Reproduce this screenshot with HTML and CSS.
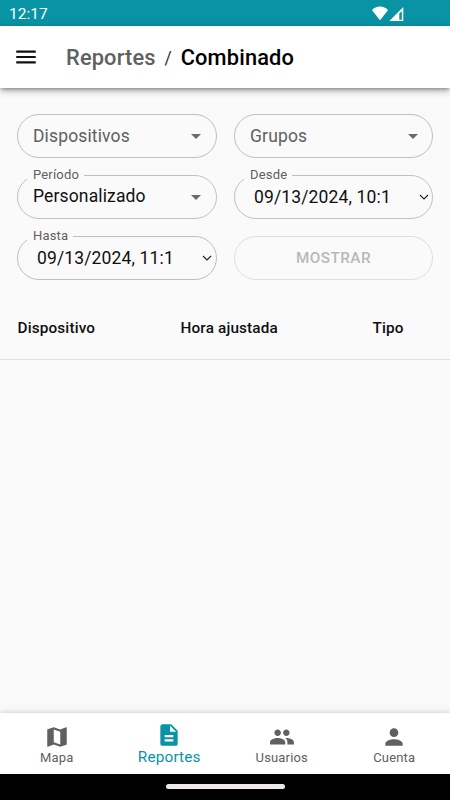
FILE: index.html
```
<!DOCTYPE html>
<html lang="es">
<head>
<meta charset="utf-8">
<title>Reportes / Combinado</title>
<link rel="stylesheet" href="styles.css">
</head>
<body>
<div class="status">
  <span class="clock">12:17</span>
  <svg class="signals" width="34" height="16" viewBox="0 0 34 16"><path fill="#fff" d="M1 4.300C5-.7 13-.7 17 4.300L9 14.200z"/><path fill="#fff" fill-rule="evenodd" d="M18.300 15L32.300 .9V15zM28.300 7.600V13.800h2.500V5z"/></svg>
</div>
<header class="appbar">
  <svg class="menu" width="26" height="26" viewBox="0 0 24 24"><path d="M3 18h18v-2H3v2zm0-5h18v-2H3v2zm0-7v2h18V6H3z"/></svg>
  <h1 class="crumbs"><span class="parent">Reportes</span><span class="slash">/</span><span class="current">Combinado</span></h1>
</header>
<main class="content">
  <form class="filters">
    <div class="field"><span class="value muted">Dispositivos</span><i class="arrow"></i></div>
    <div class="field"><span class="value muted">Grupos</span><i class="arrow"></i></div>
    <div class="field notched"><fieldset><legend>Período</legend></fieldset><label>Período</label><span class="value raised">Personalizado</span><i class="arrow"></i></div>
    <div class="field notched"><fieldset><legend>Desde</legend></fieldset><label>Desde</label><span class="value date">09/13/2024, 10:1</span><svg class="chevron" width="10" height="7" viewBox="0 0 10 7"><path d="M1 1l4 4 4-4"/></svg></div>
    <div class="field notched"><fieldset><legend>Hasta</legend></fieldset><label>Hasta</label><span class="value date">09/13/2024, 11:1</span><svg class="chevron" width="10" height="7" viewBox="0 0 10 7"><path d="M1 1l4 4 4-4"/></svg></div>
    <button class="show" type="button" disabled>MOSTRAR</button>
  </form>
  <div class="table-head"><span>Dispositivo</span><span>Hora ajustada</span><span>Tipo</span></div>
</main>
<nav class="bottom">
  <a class="tab"><svg width="26" height="26" viewBox="0 0 24 24"><path d="M20.5 3l-.16.03L15 5.1 9 3 3.36 4.9c-.21.07-.36.25-.36.48V20.500c0 .28.22.5.5.5l.16-.03L9 18.900l6 2.100 5.640-1.900c.21-.07.36-.25.36-.48V3.500c0-.28-.22-.5-.5-.5zM15 19l-6-2.110V5l6 2.110V19z"/></svg><span>Mapa</span></a>
  <a class="tab active"><svg width="26" height="26" viewBox="0 0 24 24"><path d="M14 2H6c-1.100 0-1.990.9-1.990 2L4 20c0 1.100.89 2 1.990 2H18c1.100 0 2-.9 2-2V8l-6-6zm2 16H8v-2h8v2zm0-4H8v-2h8v2zm-3-5V3.500L18.500 9H13z"/></svg><span>Reportes</span></a>
  <a class="tab"><svg width="26" height="26" viewBox="0 0 24 24"><path d="M16 11c1.660 0 2.990-1.340 2.990-3S17.660 5 16 5s-3 1.340-3 3 1.340 3 3 3zm-8 0c1.660 0 2.990-1.340 2.990-3S9.660 5 8 5 5 6.340 5 8s1.340 3 3 3zm0 2c-2.330 0-7 1.170-7 3.500V19h14v-2.500c0-2.330-4.670-3.500-7-3.500zm8 0c-.29 0-.62.02-.97.05 1.160.84 1.970 1.970 1.970 3.450V19h6v-2.500c0-2.330-4.670-3.500-7-3.500z"/></svg><span>Usuarios</span></a>
  <a class="tab"><svg width="26" height="26" viewBox="0 0 24 24"><path d="M12 12c2.210 0 4-1.790 4-4s-1.790-4-4-4-4 1.790-4 4 1.790 4 4 4zm0 2c-2.670 0-8 1.340-8 4v2h16v-2c0-2.660-5.330-4-8-4z"/></svg><span>Cuenta</span></a>
</nav>
<div class="gesture"><i></i></div>
</body>
</html>
```
FILE: styles.css
```
* { box-sizing: border-box; }
body {
  margin: 0;
  height: 800px;
  overflow: hidden;
  display: flex;
  flex-direction: column;
  background: #fafafa;
  color: #101010;
  font-family: Roboto, "Liberation Sans", sans-serif;
}
.status {
  flex: none;
  height: 26px;
  background: #0894a5;
  display: flex;
  align-items: center;
  justify-content: space-between;
  padding: 2px 45px 0 9px;
  color: #fff;
}
.clock { font-size: 15.500px; line-height: 24px; }
.signals { display: block; margin-bottom: 1px; }
.appbar {
  flex: none;
  height: 61.500px;
  background: #fff;
  display: flex;
  align-items: center;
  padding-left: 13px;
  box-shadow: 0 2px 4px -1px rgba(0,0,0,.35), 0 4px 6px rgba(0,0,0,.14), 0 1px 10px rgba(0,0,0,.12);
}
.menu { display: block; fill: #111; }
.crumbs {
  margin: 2px 0 0 27px;
  display: flex;
  align-items: center;
  font-size: 21.800px;
  font-weight: 500;
  line-height: 30px;
  letter-spacing: .16px;
}
.parent { color: #606060; }
.slash { width: 25px; text-align: center; font-size: 17.500px; font-weight: 400; line-height: 28px; color: #333; }
.current { color: #000; }
.content { flex: 1; }
.filters {
  display: grid;
  grid-template-columns: 200px 199px;
  grid-auto-rows: 44px;
  gap: 17px;
  padding: 26px 17px 0;
}
.field {
  position: relative;
  display: flex;
  align-items: center;
  padding: 0 15px;
  border: 1px solid #c0c0c0;
  border-radius: 22px;
}
.field:nth-child(even) { padding-right: 14px; }
.field.notched { border-color: transparent; }
.field fieldset {
  position: absolute;
  inset: -6px -1px -1px;
  margin: 0;
  padding: 0 9px;
  border: 1px solid #c0c0c0;
  border-radius: 22px;
}
.field legend {
  height: 11px;
  padding: 0 6px 0 5px;
  font-size: 13px;
  letter-spacing: .17px;
  visibility: hidden;
}
.field label {
  position: absolute;
  left: 15px;
  top: -9px;
  font-size: 13px;
  line-height: 16px;
  letter-spacing: .17px;
  color: #606060;
}
.value { flex: 1; font-size: 17.500px; line-height: 24px; letter-spacing: .14px; white-space: nowrap; }
.raised { margin-bottom: 2px; }
.muted { color: #606060; }
.date { padding-left: 4px; }
.arrow {
  margin-top: 1px;
  border: 5.500px solid transparent;
  border-top-color: #6b6b6b;
  border-bottom: 0;
}
.chevron { margin: 1px -11px 0 0; fill: none; stroke: #222; stroke-width: 1.100; }
.show {
  border: 1px solid #dedede;
  border-radius: 22px;
  background: none;
  color: #b8b8b8;
  font: 500 15.300px/24px Roboto, "Liberation Sans", sans-serif;
  letter-spacing: .44px;
}
.table-head {
  display: grid;
  grid-template-columns: 163px 192px auto;
  margin-top: 17px;
  padding: 19px 0 19px 17.500px;
  height: 63px;
  border-bottom: 1px solid #e0e0e0;
  font-size: 15.300px;
  font-weight: 500;
  line-height: 24px;
  letter-spacing: .16px;
}
.bottom {
  flex: none;
  height: 61px;
  display: grid;
  grid-template-columns: repeat(4, 1fr);
  background: #fff;
  box-shadow: 0 -1px 4px rgba(0,0,0,.12), 0 -4px 12px rgba(0,0,0,.04);
}
.tab {
  display: flex;
  flex-direction: column;
  align-items: center;
  padding: 10.500px 0 0 1px;
  color: #606060;
  font-size: 13px;
  line-height: 16px;
  letter-spacing: .17px;
}
.tab svg { display: block; fill: currentColor; }
.active { padding-top: 9px; color: #0894a5; font-size: 15.300px; line-height: 18px; }
.gesture {
  flex: none;
  height: 26px;
  background: #000;
  display: flex;
  justify-content: center;
  padding-top: 10px;
}
.gesture i { width: 119px; height: 5px; border-radius: 3px; background: #eee8ee; }
```
